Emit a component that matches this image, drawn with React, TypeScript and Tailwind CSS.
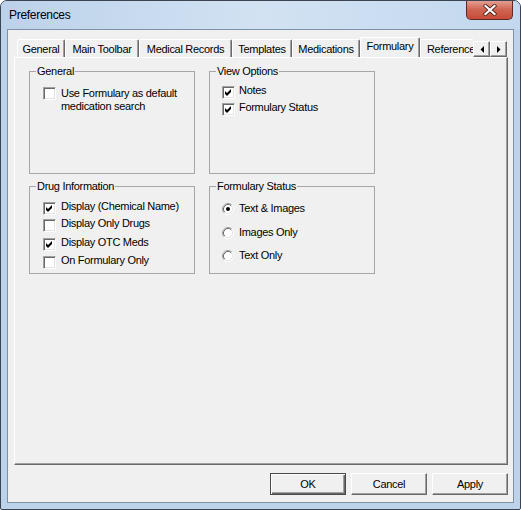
import React from "react";

const tabs = [
  { label: "General", w: "w-[48px]" },
  { label: "Main Toolbar", w: "w-[74px]" },
  { label: "Medical Records", w: "w-[93px]" },
  { label: "Templates", w: "w-[60px]" },
  { label: "Medications", w: "w-[68px]" },
  { label: "Formulary", w: "w-[60px]", active: true },
  { label: "Reference", w: "w-[62px]" },
];

function CheckBox({ checked }: { checked?: boolean }) {
  return (
    <div className="w-[13px] h-[13px] shrink-0 bg-white border border-t-[#a0a0a0] border-l-[#a0a0a0] border-b-white border-r-white shadow-[inset_1px_1px_0_#696969,inset_-1px_-1px_0_#e3e3e3] flex items-center justify-center">
      {checked && (
        <svg width="9" height="9" viewBox="0 0 9 9" className="block">
          <path d="M1 3 L3 5 L7 1 L7 4 L3 8 L1 6 Z" fill="#000" />
        </svg>
      )}
    </div>
  );
}

function Radio({ checked }: { checked?: boolean }) {
  return (
    <svg width="12" height="12" viewBox="0 0 12 12" className="block shrink-0">
      <circle cx="6" cy="6" r="4.5" fill="#fff" />
      <path d="M2.11 9.89 A5.5 5.5 0 0 1 9.89 2.11" stroke="#a0a0a0" fill="none" />
      <path d="M9.89 2.11 A5.5 5.5 0 0 1 2.11 9.89" stroke="#fff" fill="none" />
      <path d="M2.82 9.18 A4.5 4.5 0 0 1 9.18 2.82" stroke="#696969" fill="none" />
      <path d="M9.18 2.82 A4.5 4.5 0 0 1 2.82 9.18" stroke="#e3e3e3" fill="none" />
      {checked && <circle cx="6" cy="6" r="2" fill="#000" />}
    </svg>
  );
}

function CheckRow({
  checked,
  label,
  className = "",
}: {
  checked?: boolean;
  label: string;
  className?: string;
}) {
  return (
    <div className={`flex items-start leading-[13px] ${className}`}>
      <CheckBox checked={checked} />
      <span className="-mt-[2px] whitespace-nowrap">{label}</span>
    </div>
  );
}

function Group({
  title,
  className,
  children,
}: {
  title: string;
  className: string;
  children: React.ReactNode;
}) {
  return (
    <fieldset className={`border border-[#a7a7a7] ${className}`}>
      <legend className="ml-[6px] px-[1px] leading-[13px]">{title}</legend>
      {children}
    </fieldset>
  );
}

function ArrowBtn({ dir }: { dir: "left" | "right" }) {
  return (
    <div className="w-[17px] h-[16px] bg-[#f0f0f0] border border-t-white border-l-white border-b-[#696969] border-r-[#696969] shadow-[inset_-1px_-1px_0_#a0a0a0] flex items-center justify-center">
      <svg width="4" height="7" viewBox="0 0 4 7" className="block">
        {dir === "left" ? (
          <path d="M4 0 L4 7 L0.5 3.5 Z" fill="#000" />
        ) : (
          <path d="M0 0 L0 7 L3.5 3.5 Z" fill="#000" />
        )}
      </svg>
    </div>
  );
}

export default function App() {
  return (
    <div className="w-[521px] h-[510px] flex flex-col rounded-t-[7px] rounded-b-[2px] border border-[#3b4450] bg-[#bcd3ea] font-['Liberation_Sans',Arial,sans-serif] text-[11px] tracking-[-0.3px] text-black overflow-hidden">
      {/* title bar */}
      <div className="h-[28px] shrink-0 flex items-start pl-[8px] pr-[7px] bg-gradient-to-r from-[#bcd2ea] via-[#d2e2f3] to-[#c3d8ee]">
        <div className="pt-[5px] text-[12px] leading-[18px]">Preferences</div>
        <div className="ml-auto -mt-px w-[47px] h-[20px] rounded-b-[5px] border border-t-0 border-[#5e2a22] bg-gradient-to-b from-[#e4a598] via-[#cf6552] to-[#c64b37] flex items-center justify-center">
          <svg width="14" height="12" viewBox="0 0 14 12" className="block">
            <path d="M2.5 2 L11.5 10 M11.5 2 L2.5 10" stroke="#4c2019" strokeWidth="3.8" strokeLinecap="square" />
            <path d="M2.5 2 L11.5 10 M11.5 2 L2.5 10" stroke="#fff" strokeWidth="2.2" strokeLinecap="square" />
          </svg>
        </div>
      </div>

      {/* client area */}
      <div className="mx-[6px] h-[474px] shrink-0 border border-[#7d91a8] bg-[#f0f0f0] flex flex-col pt-[7px] pl-[6px] pr-[5px]">
        {/* tab strip */}
        <div className="h-[20px] flex items-end">
          <div className="ml-[3px] w-[456px] h-[20px] flex items-end overflow-hidden">
            {tabs.map((t) =>
              t.active ? (
                <div
                  key={t.label}
                  className={`${t.w} shrink-0 h-[21px] -mb-px relative z-10 bg-[#f0f0f0] border-t border-l border-r border-t-white border-l-white border-r-[#696969] shadow-[inset_-1px_0_0_#a0a0a0] rounded-t-[2px] flex items-center justify-center pb-[3px]`}
                >
                  {t.label}
                </div>
              ) : (
                <div
                  key={t.label}
                  className={`${t.w} shrink-0 h-[18px] bg-[#f0f0f0] border-t border-l border-r border-t-white border-l-white border-r-[#696969] shadow-[inset_-1px_0_0_#a0a0a0] rounded-t-[2px] flex items-center justify-center whitespace-nowrap pt-[2px]`}
                >
                  {t.label}
                </div>
              )
            )}
          </div>
          <div className="flex">
            <ArrowBtn dir="left" />
            <ArrowBtn dir="right" />
          </div>
        </div>

        {/* tab page */}
        <div className="h-[408px] shrink-0 border border-t-white border-l-white border-r-[#696969] border-b-[#696969] shadow-[inset_-1px_-1px_0_#a0a0a0] pl-[14px] pt-[7px]">
          <div className="grid grid-cols-[166px_166px] gap-x-[14px] gap-y-[6px]">
            <Group title="General" className="h-[109px]">
              <div className="mt-[9px] pl-[13px] flex items-start gap-[5px]">
                <CheckBox />
                <div className="leading-[13px]">
                  Use Formulary as default
                  <br />
                  medication search
                </div>
              </div>
            </Group>

            <Group title="View Options" className="h-[109px]">
              <div className="mt-[8px] pl-[12px] flex flex-col gap-[4px]">
                <CheckRow checked label="Notes" className="gap-[4px]" />
                <CheckRow checked label="Formulary Status" className="gap-[4px]" />
              </div>
            </Group>

            <Group title="Drug Information" className="h-[94px]">
              <div className="mt-[9px] pl-[13px] flex flex-col">
                <CheckRow checked label="Display (Chemical Name)" className="gap-[5px]" />
                <CheckRow label="Display Only Drugs" className="gap-[5px] mt-[4px]" />
                <CheckRow checked label="Display OTC Meds" className="gap-[5px] mt-[6px]" />
                <CheckRow label="On Formulary Only" className="gap-[5px] mt-[5px]" />
              </div>
            </Group>

            <Group title="Formulary Status" className="h-[94px]">
              <div className="mt-[9px] pl-[12px] flex flex-col">
                <div className="flex items-center gap-[5px] leading-[13px]">
                  <Radio checked />
                  <span>Text &amp; Images</span>
                </div>
                <div className="mt-[11px] flex items-center gap-[5px] leading-[13px]">
                  <Radio />
                  <span>Images Only</span>
                </div>
                <div className="mt-[10px] flex items-center gap-[5px] leading-[13px]">
                  <Radio />
                  <span>Text Only</span>
                </div>
              </div>
            </Group>
          </div>
        </div>

        {/* buttons */}
        <div className="mt-[8px] flex justify-end gap-[5px]">
          <button className="w-[76px] h-[22px] bg-[#f0f0f0] border border-[#4a4a4a] shadow-[inset_1px_1px_0_#fff,inset_-1px_-1px_0_#696969,inset_-2px_-2px_0_#a0a0a0]">
            OK
          </button>
          <button className="w-[76px] h-[22px] bg-[#f0f0f0] border border-t-white border-l-white border-b-[#696969] border-r-[#696969] shadow-[inset_-1px_-1px_0_#a0a0a0]">
            Cancel
          </button>
          <button className="w-[76px] h-[22px] bg-[#f0f0f0] border border-t-white border-l-white border-b-[#696969] border-r-[#696969] shadow-[inset_-1px_-1px_0_#a0a0a0]">
            Apply
          </button>
        </div>
      </div>
    </div>
  );
}
